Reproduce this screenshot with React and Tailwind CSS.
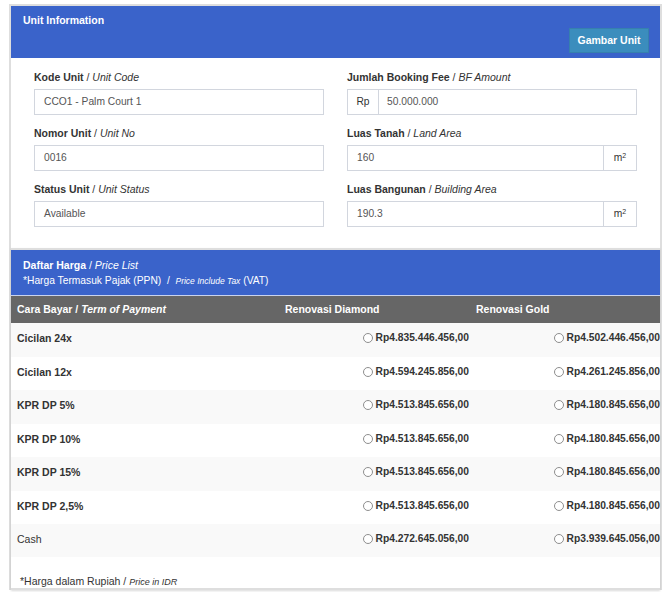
import React from 'react';

const font = { fontFamily: '"Liberation Sans", Arial, sans-serif' };

const fieldsLeft = [
  { label: 'Kode Unit', en: 'Unit Code', value: 'CCO1 - Palm Court 1' },
  { label: 'Nomor Unit', en: 'Unit No', value: '0016' },
  { label: 'Status Unit', en: 'Unit Status', value: 'Available' },
];

const prices = [
  { term: 'Cicilan 24x', diamond: 'Rp4.835.446.456,00', gold: 'Rp4.502.446.456,00', h: 'h-[34px]', bg: 'bg-[#f9f9f9]', bold: true },
  { term: 'Cicilan 12x', diamond: 'Rp4.594.245.856,00', gold: 'Rp4.261.245.856,00', h: 'h-[33px]', bg: 'bg-white', bold: true },
  { term: 'KPR DP 5%', diamond: 'Rp4.513.845.656,00', gold: 'Rp4.180.845.656,00', h: 'h-[34px]', bg: 'bg-[#f9f9f9]', bold: true },
  { term: 'KPR DP 10%', diamond: 'Rp4.513.845.656,00', gold: 'Rp4.180.845.656,00', h: 'h-[33px]', bg: 'bg-white', bold: true },
  { term: 'KPR DP 15%', diamond: 'Rp4.513.845.656,00', gold: 'Rp4.180.845.656,00', h: 'h-[34px]', bg: 'bg-[#f9f9f9]', bold: true },
  { term: 'KPR DP 2,5%', diamond: 'Rp4.513.845.656,00', gold: 'Rp4.180.845.656,00', h: 'h-[33px]', bg: 'bg-white', bold: true },
  { term: 'Cash', diamond: 'Rp4.272.645.056,00', gold: 'Rp3.939.645.056,00', h: 'h-[33px]', bg: 'bg-[#f9f9f9]', bold: false },
];

function Label({ label, en }) {
  return (
    <div className="text-[10.5px] leading-[14px] text-[#333] mb-[5px]">
      <span className="font-bold">{label}</span> / <i>{en}</i>
    </div>
  );
}

function PlainInput({ value }) {
  return (
    <div className="h-[26px] border border-[#d2d6de] flex items-center pl-[9px] text-[10.25px] text-[#555]">
      {value}
    </div>
  );
}

function M2() {
  return (
    <span>
      m<sup className="text-[7px]">2</sup>
    </span>
  );
}

function Price({ value }) {
  return (
    <div className="self-start flex justify-end items-center gap-[3px] pt-[8px] h-[22px]">
      <span className="w-[10px] h-[10px] rounded-full border border-[#8e8e8e] bg-white"></span>
      <span className="text-[10.25px] leading-[14px] font-bold text-[#333]">{value}</span>
    </div>
  );
}

export default function App() {
  return (
    <div className="w-[670px] h-[592px] bg-white pt-[4px] overflow-hidden" style={font}>
      <div className="ml-[9px] w-[653px] border-x-2 border-[#dedede]">
        {/* Unit Information */}
        <div className="border-t-2 border-[#dedede]">
          <div className="bg-[#3a63ca] h-[52px] pl-[12px] pr-[11px] pt-[7px] flex flex-col">
            <div className="text-white font-bold text-[10.5px] leading-[14px]">Unit Information</div>
            <div className="flex justify-end mt-[1px]">
              <button className="w-[80px] h-[25px] bg-[#3b8dbd] border border-[#3680ae] text-white font-bold text-[10.5px]">
                Gambar Unit
              </button>
            </div>
          </div>

          <div className="bg-white px-[23px] pt-[12px] pb-[21px] grid grid-cols-2 gap-x-[23px] gap-y-[11px]">
            <div>
              <Label {...fieldsLeft[0]} />
              <PlainInput value={fieldsLeft[0].value} />
            </div>
            <div>
              <Label label="Jumlah Booking Fee" en="BF Amount" />
              <div className="h-[26px] border border-[#d2d6de] flex items-stretch text-[10.25px] text-[#555]">
                <div className="w-[31px] border-r border-[#d2d6de] flex items-center justify-center text-[#333]">Rp</div>
                <div className="flex items-center pl-[8px]">50.000.000</div>
              </div>
            </div>
            <div>
              <Label {...fieldsLeft[1]} />
              <PlainInput value={fieldsLeft[1].value} />
            </div>
            <div>
              <Label label="Luas Tanah" en="Land Area" />
              <div className="h-[26px] border border-[#d2d6de] flex items-stretch text-[10.25px] text-[#555]">
                <div className="flex-1 flex items-center pl-[9px]">160</div>
                <div className="w-[33px] border-l border-[#d2d6de] flex items-center justify-center text-[#333]"><M2 /></div>
              </div>
            </div>
            <div>
              <Label {...fieldsLeft[2]} />
              <PlainInput value={fieldsLeft[2].value} />
            </div>
            <div>
              <Label label="Luas Bangunan" en="Building Area" />
              <div className="h-[26px] border border-[#d2d6de] flex items-stretch text-[10.25px] text-[#555]">
                <div className="flex-1 flex items-center pl-[9px]">190.3</div>
                <div className="w-[33px] border-l border-[#d2d6de] flex items-center justify-center text-[#333]"><M2 /></div>
              </div>
            </div>
          </div>
        </div>

        {/* Daftar Harga */}
        <div className="border-t-2 border-b-2 border-[#dedede] shadow-[0_1px_2px_rgba(0,0,0,0.15)]">
          <div className="bg-[#3a63ca] h-[45px] pl-[12px] pt-[7px] text-white leading-[16px]">
            <div className="text-[10.5px]">
              <span className="font-bold">Daftar Harga</span> / <i>Price List</i>
            </div>
            <div className="text-[10.25px]">
              *Harga Termasuk Pajak (PPN) &nbsp;/&nbsp; <i className="text-[8.5px]">Price Include Tax</i> (VAT)
            </div>
          </div>

          <div className="grid grid-cols-[267px_191px_191px] h-[28px] items-center bg-[#666] border-t border-[#c9d3ee] text-white font-bold text-[10.5px]">
            <div className="pl-[6px]">Cara Bayar / <i>Term of Payment</i></div>
            <div className="pl-[7px]">Renovasi Diamond</div>
            <div className="pl-[7px]">Renovasi Gold</div>
          </div>

          {prices.map((p) => (
            <div key={p.term} className={`grid grid-cols-[267px_191px_191px] ${p.h} ${p.bg}`}>
              <div className={`pl-[6px] pt-[8px] leading-[14px] text-[10.5px] text-[#333] ${p.bold ? 'font-bold' : ''}`}>{p.term}</div>
              <Price value={p.diamond} />
              <Price value={p.gold} />
            </div>
          ))}

          <div className="h-[31px] bg-white pl-[9px] pt-[17px] leading-[14px] text-[10.5px] text-[#333]">
            *Harga dalam Rupiah / <i className="text-[9px]">Price in IDR</i>
          </div>
        </div>
      </div>
    </div>
  );
}
